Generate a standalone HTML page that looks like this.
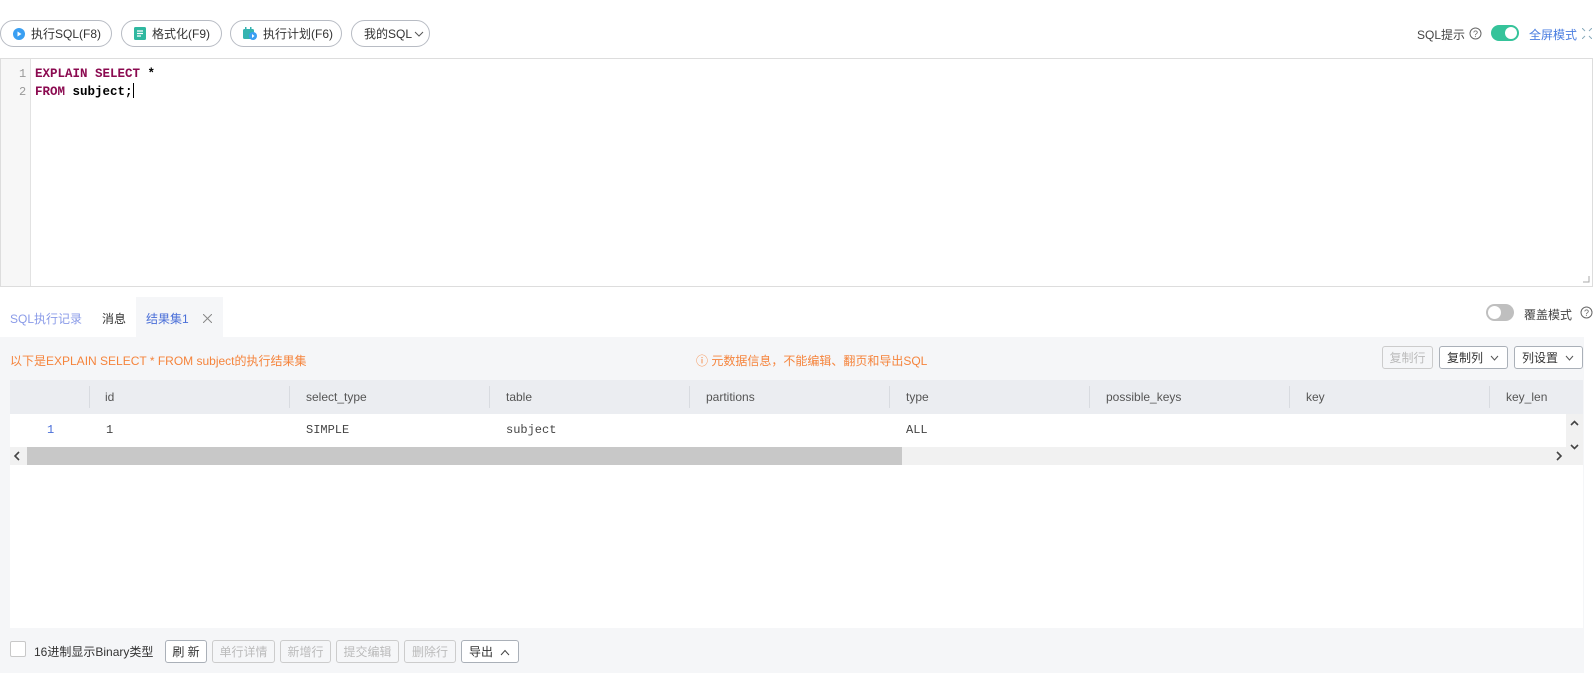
<!DOCTYPE html>
<html><head><meta charset="utf-8"><style>
*{margin:0;padding:0;box-sizing:border-box}
body{width:1594px;height:673px;background:#fff;font-family:"Liberation Sans","Noto Sans CJK SC",sans-serif;font-size:12px;color:#333;position:relative;overflow:hidden}
.a{position:absolute;white-space:nowrap}
.pill{position:absolute;top:20px;height:27px;border:1px solid #b8bcc4;border-radius:14px;font-size:12px;color:#333;display:flex;align-items:center;padding-left:12px}
.mono{font-family:"Liberation Mono","DejaVu Sans Mono",monospace}
.btn{position:absolute;height:23px;border:1px solid #aab0b8;border-radius:3px;background:#fff;font-size:12px;display:flex;align-items:center;justify-content:center;color:#333}
.dis{color:#bbb;border-color:#ccc;background:#f5f6f8}
.hd{position:absolute;top:380px;height:34px;line-height:34px;font-size:12px;color:#555}
.dv{position:absolute;top:386px;width:1px;height:22px;background:#d8dbe0}
.chev{position:absolute;right:8px;top:8px}
</style></head><body>
<!-- toolbar -->
<div class="pill" style="left:0;width:112px"><svg width="12" height="12" style="margin-right:6px"><circle cx="6" cy="6" r="6" fill="#3a9ff2"/><path d="M4.5 3.5 L8.5 6 L4.5 8.5Z" fill="#fff"/></svg>执行SQL(F8)</div>
<div class="pill" style="left:121px;width:101px"><svg width="12" height="13" style="margin-right:6px"><rect x="0" y="0" width="12" height="13" rx="1.5" fill="#2fb8a0"/><path d="M3 4h6M3 6.5h6M3 9h4" stroke="#fff" stroke-width="1.2"/></svg>格式化(F9)</div>
<div class="pill" style="left:230px;width:112px"><svg width="14" height="13" style="margin-right:6px"><rect x="0" y="2" width="11" height="10" rx="1.5" fill="#35b3b0"/><rect x="2" y="0" width="1.5" height="3" fill="#35b3b0"/><rect x="7" y="0" width="1.5" height="3" fill="#35b3b0"/><circle cx="10" cy="9" r="4" fill="#3a9ff2"/><path d="M9 7l2.5 2L9 11z" fill="#fff"/></svg>执行计划(F6)</div>
<div class="pill" style="left:351px;width:79px">我的SQL<svg width="10" height="8" style="margin-left:2px"><path d="M1 2l4 4 4-4" stroke="#555" fill="none"/></svg></div>
<div class="a" style="left:1417px;top:26px;font-size:12px;color:#444">SQL提示</div>
<svg class="a" style="left:1469px;top:27px" width="13" height="13"><circle cx="6.5" cy="6.5" r="5.5" stroke="#666" fill="none"/><text x="6.5" y="10" font-size="9" text-anchor="middle" fill="#666" font-family="Liberation Sans">?</text></svg>
<div class="a" style="left:1491px;top:25px;width:28px;height:16px;border-radius:8px;background:#35c39a"></div>
<div class="a" style="left:1505px;top:27px;width:12px;height:12px;border-radius:6px;background:#fff"></div>
<div class="a" style="left:1529px;top:26px;font-size:12px;color:#4a7de0">全屏模式</div>
<svg class="a" style="left:1582px;top:28px" width="10" height="11"><path d="M0 0l3 3M10 0l-3 3M0 11l3-3M10 11l-3-3" stroke="#8ab" stroke-width="1"/></svg>
<!-- editor -->
<div class="a" style="left:0;top:58px;width:1593px;height:229px;border:1px solid #ddd"></div>
<div class="a" style="left:1px;top:59px;width:30px;height:227px;background:#f7f7f7;border-right:1px solid #e2e2e2"></div>
<div class="a mono" style="left:19px;top:65px;font-size:12px;line-height:18px;color:#999">1<br>2</div>
<div class="a mono" style="left:35px;top:65px;font-size:12.5px;line-height:18px;font-weight:bold;color:#000"><span style="color:#8b0a50">EXPLAIN SELECT</span> *<br><span style="color:#8b0a50">FROM</span> subject;<span style="display:inline-block;width:1px;height:15px;background:#000;vertical-align:-3px"></span></div>
<svg class="a" style="left:1583px;top:276px" width="7" height="7"><path d="M6 0v6H0" stroke="#aaa" fill="none"/></svg>
<!-- tabs -->
<div class="a" style="left:10px;top:310px;font-size:12px;color:#8a9be8">SQL执行记录</div>
<div class="a" style="left:102px;top:310px;font-size:12px;color:#333">消息</div>
<div class="a" style="left:136px;top:297px;width:87px;height:40px;background:#f5f6f8"></div>
<div class="a" style="left:146px;top:310px;font-size:12px;color:#4a6fd8">结果集1</div>
<svg class="a" style="left:203px;top:314px" width="9" height="9"><path d="M0 0l9 9M9 0L0 9" stroke="#888"/></svg>
<div class="a" style="left:1486px;top:304px;width:28px;height:17px;border-radius:9px;background:#bfbfbf"></div>
<div class="a" style="left:1488px;top:306px;width:13px;height:13px;border-radius:7px;background:#fff"></div>
<div class="a" style="left:1524px;top:306px;font-size:12px;color:#444">覆盖模式</div>
<svg class="a" style="left:1580px;top:306px" width="13" height="13"><circle cx="6.5" cy="6.5" r="5.5" stroke="#666" fill="none"/><text x="6.5" y="10" font-size="9" text-anchor="middle" fill="#666" font-family="Liberation Sans">?</text></svg>
<!-- panel -->
<div class="a" style="left:0;top:337px;width:1584px;height:336px;background:#f5f6f8"></div>
<div class="a" style="left:10px;top:352px;font-size:12px;color:#f5843c">以下是EXPLAIN SELECT * FROM subject的执行结果集</div>
<div class="a" style="left:696px;top:352px;font-size:12px;color:#f5843c">ⓘ 元数据信息，不能编辑、翻页和导出SQL</div>
<div class="btn dis" style="left:1382px;top:346px;width:51px">复制行</div>
<div class="btn" style="left:1439px;top:346px;width:69px;justify-content:flex-start;padding-left:7px">复制列<svg class="chev" width="9" height="6"><path d="M1 1l3.5 4 3.5-4" stroke="#555" fill="none"/></svg></div>
<div class="btn" style="left:1514px;top:346px;width:69px;justify-content:flex-start;padding-left:7px">列设置<svg class="chev" width="9" height="6"><path d="M1 1l3.5 4 3.5-4" stroke="#555" fill="none"/></svg></div>
<!-- table -->
<div class="a" style="left:10px;top:380px;width:1573px;height:248px;background:#fff"></div>
<div class="a" style="left:10px;top:380px;width:1573px;height:34px;background:#ebedf1"></div>
<div class="dv" style="left:89px"></div><div class="dv" style="left:289px"></div><div class="dv" style="left:489px"></div><div class="dv" style="left:689px"></div><div class="dv" style="left:889px"></div><div class="dv" style="left:1089px"></div><div class="dv" style="left:1289px"></div><div class="dv" style="left:1489px"></div>
<div class="hd" style="left:105px">id</div><div class="hd" style="left:306px">select_type</div><div class="hd" style="left:506px">table</div><div class="hd" style="left:706px">partitions</div><div class="hd" style="left:906px">type</div><div class="hd" style="left:1106px">possible_keys</div><div class="hd" style="left:1306px">key</div><div class="hd" style="left:1506px">key_len</div>
<div class="a mono" style="left:47px;top:423px;font-size:12px;color:#4a6fd8">1</div>
<div class="a mono" style="left:106px;top:423px;font-size:12px;color:#444">1</div>
<div class="a mono" style="left:306px;top:423px;font-size:12px;color:#444">SIMPLE</div>
<div class="a mono" style="left:506px;top:423px;font-size:12px;color:#444">subject</div>
<div class="a mono" style="left:906px;top:423px;font-size:12px;color:#444">ALL</div>
<div class="a" style="left:1566px;top:414px;width:17px;height:51px;background:#f1f1f1"></div>
<svg class="a" style="left:1569px;top:418px" width="11" height="34"><path d="M2 7l3.5-3.5L9 7M2 27l3.5 3.5L9 27" stroke="#444" stroke-width="1.6" fill="none"/></svg>
<div class="a" style="left:10px;top:447px;width:1556px;height:18px;background:#f1f1f1"></div>
<div class="a" style="left:27px;top:447px;width:875px;height:18px;background:#c8c8c8"></div>
<svg class="a" style="left:13px;top:451px" width="8" height="10"><path d="M6 1L2 5l4 4" stroke="#444" stroke-width="1.6" fill="none"/></svg>
<svg class="a" style="left:1555px;top:451px" width="8" height="10"><path d="M2 1l4 4-4 4" stroke="#444" stroke-width="1.6" fill="none"/></svg>
<!-- bottom -->
<div class="a" style="left:10px;top:641px;width:16px;height:16px;border:1px solid #c8c8c8;background:#fff;border-radius:2px"></div>
<div class="a" style="left:34px;top:643px;font-size:12px;color:#333">16进制显示Binary类型</div>
<div class="btn" style="left:165px;top:640px;width:42px;height:23px">刷 新</div>
<div class="btn dis" style="left:212px;top:640px;width:63px;height:23px">单行详情</div>
<div class="btn dis" style="left:280px;top:640px;width:51px;height:23px">新增行</div>
<div class="btn dis" style="left:336px;top:640px;width:63px;height:23px">提交编辑</div>
<div class="btn dis" style="left:404px;top:640px;width:52px;height:23px">删除行</div>
<div class="btn" style="left:461px;top:640px;width:58px;height:23px;justify-content:flex-start;padding-left:7px">导出<svg class="chev" width="10" height="7"><path d="M1 6l4-4.5 4 4.5" stroke="#444" fill="none"/></svg></div>
</body></html>
